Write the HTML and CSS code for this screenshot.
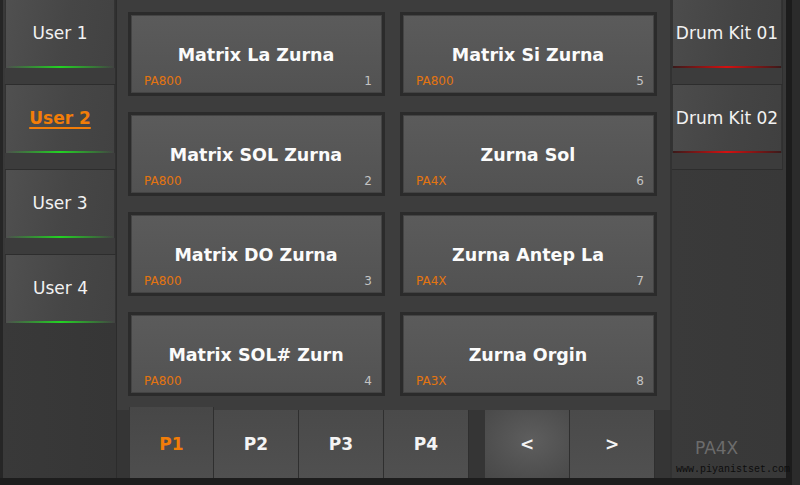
FILE: index.html
```html
<!DOCTYPE html>
<html lang="tr">
<head>
<meta charset="utf-8">
<title>Styles</title>
<link rel="stylesheet" href="styles.css">
</head>
<body>
<div class="app">
  <div class="main">
    <aside class="users">
      <div class="slot"><div class="tab">User 1</div></div>
      <div class="slot"><div class="tab active">User 2</div></div>
      <div class="slot"><div class="tab">User 3</div></div>
      <div class="slot"><div class="tab">User 4</div></div>
    </aside>

    <section class="center">
      <div class="grid">
        <div class="card"><div class="title">Matrix La Zurna</div><div class="foot"><span class="src">PA800</span><span class="num">1</span></div></div>
        <div class="card"><div class="title">Matrix Si Zurna</div><div class="foot"><span class="src">PA800</span><span class="num">5</span></div></div>
        <div class="card"><div class="title">Matrix SOL Zurna</div><div class="foot"><span class="src">PA800</span><span class="num">2</span></div></div>
        <div class="card"><div class="title">Zurna Sol</div><div class="foot"><span class="src">PA4X</span><span class="num">6</span></div></div>
        <div class="card"><div class="title">Matrix DO Zurna</div><div class="foot"><span class="src">PA800</span><span class="num">3</span></div></div>
        <div class="card"><div class="title">Zurna Antep La</div><div class="foot"><span class="src">PA4X</span><span class="num">7</span></div></div>
        <div class="card"><div class="title">Matrix SOL# Zurn</div><div class="foot"><span class="src">PA800</span><span class="num">4</span></div></div>
        <div class="card"><div class="title">Zurna Orgin</div><div class="foot"><span class="src">PA3X</span><span class="num">8</span></div></div>
      </div>
      <div class="pager">
        <div class="pages">
          <div class="pbtn current">P1</div>
          <div class="pbtn">P2</div>
          <div class="pbtn">P3</div>
          <div class="pbtn">P4</div>
        </div>
        <div class="nav">
          <div class="pbtn lit">&lt;</div>
          <div class="pbtn">&gt;</div>
        </div>
      </div>
    </section>

    <aside class="kits">
      <div class="slot"><div class="tab kit">Drum Kit 01</div></div>
      <div class="slot"><div class="tab kit">Drum Kit 02</div></div>
      <div class="model">PA4X</div>
    </aside>
  </div>
  <div class="url">www.piyanistset.com</div>
</div>
</body>
</html>
```

FILE: styles.css
```css
* {
  box-sizing: border-box;
}

html, body {
  margin: 0;
  padding: 0;
  background: #1d1d1d;
}

.app {
  position: relative;
  width: 800px;
  height: 485px;
  padding-right: 8px;
  background: #2b2b2b;
  font-family: "DejaVu Sans", "Liberation Sans", sans-serif;
  color: #f4f4f4;
}

.main {
  display: flex;
  height: 485px;
  border-right: 6px solid #1c1c1c;
  border-bottom: 7px solid #1d1d1d;
}

/* side columns with the user / drum-kit tabs */
.users {
  width: 117px;
  flex: none;
  padding-left: 2px;
  border-left: 3px solid #262626;
  border-right: 1px solid #2c2c2c;
  background: linear-gradient(90deg, #393939, #363636);
}

.kits {
  width: 116px;
  flex: none;
  display: flex;
  flex-direction: column;
  padding-right: 3px;
  border-left: 2px solid #323232;
  background: linear-gradient(90deg, #3a3a3a, #383838);
}

.slot {
  height: 85px;
  border-bottom: 1px solid #2d2d2d;
  border-right: 1px solid #303030;
  background: #3c3c3c;
}

.users .slot:last-child {
  border: 0;
  background: transparent;
}

.tab {
  height: 68px;
  display: flex;
  align-items: center;
  justify-content: center;
  padding-bottom: 2px;
  font-size: 17px;
  color: #f2f2f2;
  background:
    linear-gradient(90deg, transparent, #22d322 50%, transparent) bottom / 100% 2px no-repeat,
    linear-gradient(100deg, #505050, #464646 55%, #424242);
  border-left: 1px solid #333;
  border-right: 1px solid #333;
}

.tab.active {
  color: #f27d08;
  font-weight: bold;
  text-decoration: underline;
  text-decoration-thickness: 2px;
  text-underline-offset: 3px;
}

.tab.kit {
  background:
    linear-gradient(90deg, #3a1a1a, #d41111 50%, #3a1a1a) bottom / 100% 2px no-repeat,
    linear-gradient(100deg, #4c4c4c, #444444 55%, #404040);
}

.model {
  margin-top: auto;
  padding: 0 0 20px 23px;
  font-size: 17px;
  line-height: 20px;
  color: #6c6c6c;
}

/* centre: preset cards and page selector */
.center {
  width: 553px;
  flex: none;
  display: flex;
  flex-direction: column;
}

.grid {
  height: 410px;
  display: grid;
  grid-template-columns: 257px 257px;
  grid-template-rows: repeat(4, 84px);
  column-gap: 15px;
  row-gap: 16px;
  padding: 12px 13px 14px 11px;
  background: #3d3d3d;
}

.card {
  display: grid;
  grid-template-areas: "stack";
  border: 3px solid #2b2b2b;
  box-shadow: inset 0 0 0 1px #444;
  background: linear-gradient(180deg, #5b5b5b, #525252);
  padding: 0 10px 5px 13px;
}

.title,
.foot {
  grid-area: stack;
}

.title {
  align-self: center;
  text-align: center;
  font-weight: bold;
  font-size: 17.5px;
  color: #fbfbfb;
  white-space: nowrap;
  overflow: hidden;
  padding-right: 4px;
  margin-top: 6px;
}

.foot {
  align-self: end;
  display: flex;
  justify-content: space-between;
  font-size: 12px;
  line-height: 14px;
}

.src {
  color: #e47510;
}

.num {
  color: #c4c4c4;
}

.pager {
  height: 68px;
  display: flex;
  gap: 16px;
  padding-left: 12px;
  background: #353535;
}

.pages,
.nav {
  display: flex;
}

.pbtn {
  width: 85px;
  height: 68px;
  display: flex;
  align-items: center;
  justify-content: center;
  font-weight: bold;
  font-size: 17px;
  color: #f4f4f4;
  border-right: 1px solid #2f2f2f;
  background: linear-gradient(180deg, #4a4a4a, #505050);
}

.pbtn.current {
  height: 71px;
  margin-top: -3px;
  padding-top: 3px;
  color: #f27d08;
  border-left: 1px solid #343434;
  background: linear-gradient(180deg, #474747, #4e4e4e);
}

.pbtn.lit {
  background: radial-gradient(ellipse at 55% 45%, #5e5e5e, #4e4e4e 70%, #484848);
}

/* site watermark over the bottom-right corner */
.url {
  position: absolute;
  left: 676px;
  top: 464px;
  font-family: "Liberation Mono", monospace;
  font-size: 10px;
  line-height: 12px;
  color: #0d0d0d;
}
```
